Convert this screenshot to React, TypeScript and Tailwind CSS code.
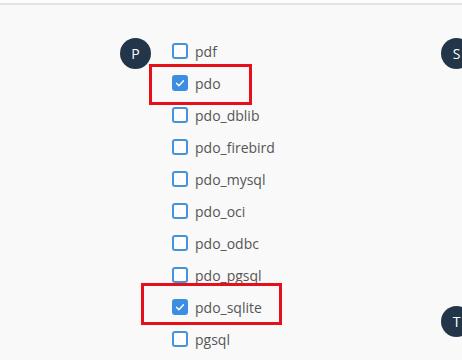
import React from 'react';

type Ext = { name: string; checked?: boolean; mark?: 'short' | 'long' };

const groups: { letter: string; items: Ext[] }[][] = [
  [
    {
      letter: 'P',
      items: [
        { name: 'pdf' },
        { name: 'pdo', checked: true, mark: 'short' },
        { name: 'pdo_dblib' },
        { name: 'pdo_firebird' },
        { name: 'pdo_mysql' },
        { name: 'pdo_oci' },
        { name: 'pdo_odbc' },
        { name: 'pdo_pgsql' },
        { name: 'pdo_sqlite', checked: true, mark: 'long' },
        { name: 'pgsql' },
        { name: 'phar' },
      ],
    },
  ],
  [
    {
      letter: 'S',
      items: [
        { name: 'session' },
        { name: 'shmop' },
        { name: 'simplexml' },
        { name: 'snmp' },
        { name: 'soap' },
        { name: 'sockets' },
        { name: 'sodium' },
        { name: 'sqlite3' },
      ],
    },
    { letter: 'T', items: [{ name: 'tidy' }, { name: 'tokenizer' }] },
  ],
];

const Checkbox = ({ checked }: { checked?: boolean }) =>
  checked ? (
    <span className="flex h-4 w-4 shrink-0 items-center justify-center rounded-[3px] bg-[#3b8ee0]">
      <svg width="12" height="12" viewBox="0 0 12 12" fill="none">
        <path d="M2.5 6.3l2.4 2.4 4.6-5" stroke="white" strokeWidth="1.4" strokeLinecap="round" strokeLinejoin="round" />
      </svg>
    </span>
  ) : (
    <span className="h-4 w-4 shrink-0 rounded-[3px] border-2 border-[#4493dc] bg-white" />
  );

export default function App() {
  return (
    <div className="h-[360px] w-[462px] overflow-hidden bg-[#f9f9f9] font-['Open_Sans',sans-serif]">
      <div className="h-[3px] bg-[#fdfdfd]" />
      <div className="h-[2px] bg-[#e4e4e4]" />
      <div className="flex pl-[120px] pt-[30px]">
        {groups.map((col, ci) => (
          <div key={ci} className="flex w-[321px] shrink-0 flex-col gap-3">
            {col.map((g) => (
              <div key={g.letter} className="flex">
                <div className="mt-[3px] flex h-[31px] w-[31px] shrink-0 items-center justify-center rounded-full bg-[#233549] text-[14px] text-white">
                  {g.letter}
                </div>
                <ul className="ml-[21px] flex flex-col">
                  {g.items.map((it) => (
                    <li key={it.name} className="relative flex h-8 items-center gap-[7px] text-[14px] text-[#555]">
                      <Checkbox checked={it.checked} />
                      <span>{it.name}</span>
                      {it.mark === 'short' && (
                        <div className="absolute left-[-23px] top-[-3px] h-[41px] w-[103px] border-[3px] border-[#e5101a]" />
                      )}
                      {it.mark === 'long' && (
                        <div className="absolute left-[-31px] top-[-8px] h-[42px] w-[141px] border-[3px] border-[#e5101a]" />
                      )}
                    </li>
                  ))}
                </ul>
              </div>
            ))}
          </div>
        ))}
      </div>
    </div>
  );
}
